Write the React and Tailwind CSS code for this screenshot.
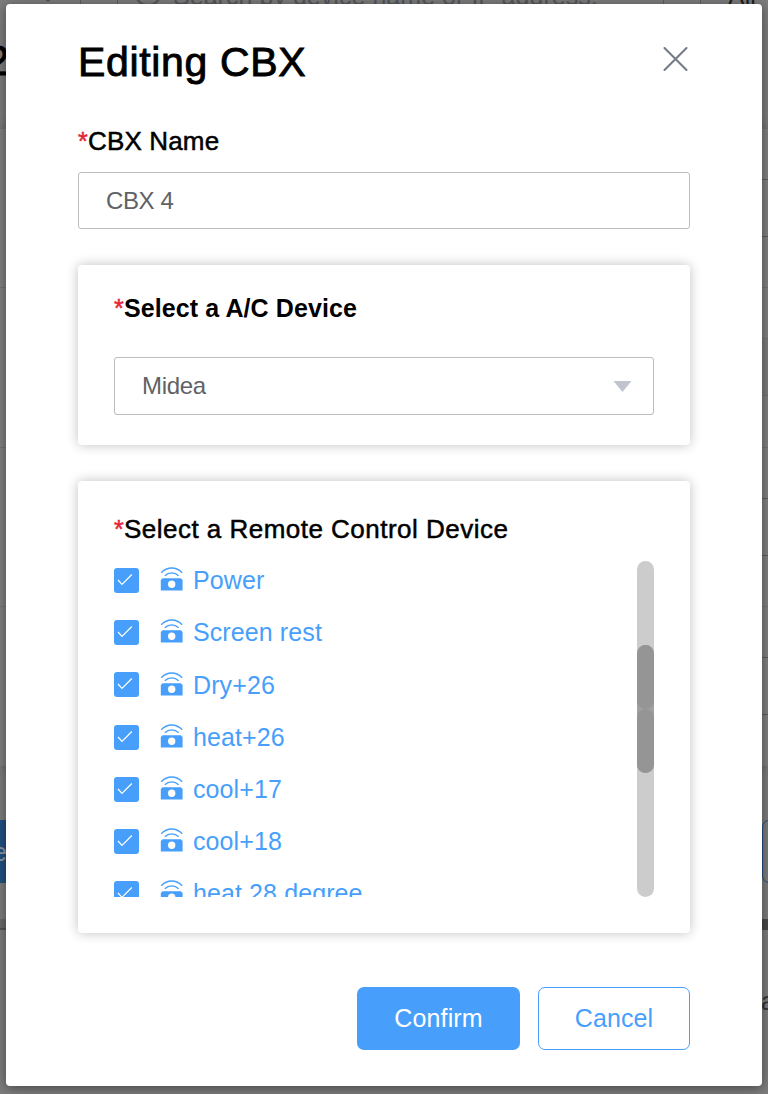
import React from "react";

const commands = ["Power", "Screen rest", "Dry+26", "heat+26", "cool+17", "cool+18", "heat 28 degree"];

const tableRows = [
  { height: "h-[159px]", field: "border-[#5c5c5c]" },
  { height: "h-[160px]", field: "border-[#727272] bg-[#7a7c7e]" },
  { height: "h-[159px]", field: "border-[#5c5c5c]" },
  { height: "h-[160px]", field: "border-[#5c5c5c]" },
];

function RemoteIcon() {
  return (
    <svg className="block shrink-0" width="24" height="26" viewBox="0 0 24 26" fill="none">
      <path d="M1.2 6.8C7.2 .4 16.2 .4 22.2 6.8M4.8 9.8C8.6 6 14.8 6 18.6 9.8" stroke="#479ffb" strokeWidth="1.3" />
      <path fillRule="evenodd" d="M2.6 12.2H20.8L22.6 14V24.4H.8V14ZM11.7 14.5a3.7 3.7 0 1 0 0 7.4a3.7 3.7 0 1 0 0-7.4Z" fill="#479ffb" />
    </svg>
  );
}

function Command({ label }) {
  return (
    <label className="flex h-[52.2px] items-start text-[#479ffb]">
      <span className="mt-[7px] flex size-[25px] shrink-0 items-center justify-center rounded-[3px] bg-[#479ffb]">
        <svg width="25" height="25" viewBox="0 0 25 25" fill="none">
          <path d="M4 12L8 16.3L17.8 6.5" stroke="white" strokeWidth="1.2" />
        </svg>
      </span>
      <span className="ml-[21px] mt-[5.2px]"><RemoteIcon /></span>
      <span className="ml-[9px] mt-[3.2px] text-[25px] leading-[32px] tracking-[0.1px] whitespace-nowrap">{label}</span>
    </label>
  );
}

function Required() {
  return <span className="w-[10px] shrink-0 text-[25px] text-[#e32636] [-webkit-text-stroke:0.5px_#e32636]">*</span>;
}

function Backdrop() {
  return (
    <div aria-hidden="true" className="col-start-1 row-start-1 flex h-[1094px] flex-col overflow-hidden bg-[#7d7d7d]">
      <div className="flex h-[34px] items-start text-[25px] leading-[30px] whitespace-nowrap text-[#56575a]">
        <div className="flex h-5 w-[81px] justify-end border-r border-[#606060] pr-[27px]">
          <svg width="10" height="4" viewBox="0 0 10 4"><path d="M2.5 0H7.5L5 2Z" fill="#56575a" /></svg>
        </div>
        <div className="ml-[36px] flex h-5 w-[547px] border-x border-[#606060] pl-[16px]">
          <svg className="mt-[-22px] shrink-0" width="28" height="28" viewBox="0 0 28 28" fill="none"><circle cx="14" cy="14" r="13" stroke="#56575a" strokeWidth="2" /></svg>
          <span className="ml-[11px] mt-[-19px] tracking-[0.04px]">Search by device name or IP address.</span>
        </div>
        <div className="ml-[36px] h-5 border-l border-[#606060] pl-[27px]">
          <span className="mt-[-19px] block text-[#202020]">All</span>
        </div>
      </div>
      <div className="-ml-[14px] h-[94px] pt-[4px] text-[42px] leading-[46px] text-black [-webkit-text-stroke:0.8px_black]">2</div>
      <div className="flex shrink-0 flex-col bg-[#808080] shadow-[0_0_12px_rgba(0,0,0,0.2)]">
        {tableRows.map((row, i) => (
          <div key={i} className={`${row.height} flex items-start justify-end border-t border-[#747474] pt-[50px]`}>
            <div className={`${row.field} h-[58px] w-[7px] border-y`} />
          </div>
        ))}
      </div>
      <div className="flex h-[153px] shrink-0 items-start justify-between pt-[54px]">
        <div className="-ml-[7px] h-[63px] w-[14px] bg-[#235080] pt-[16px] text-[25px] leading-[32px] text-[#8d98a5]">e</div>
        <div className="-mr-[34px] h-[63px] w-10 rounded-[7px] border border-[#235080]" />
      </div>
      <div className="flex h-[11px] shrink-0 justify-between border-b-2 border-[#555555] bg-[#6b6b6b]">
        <div className="ml-auto -mb-[2px] w-2 bg-[#484848]" />
      </div>
      <div className="-mr-[7px] mt-[56px] self-end text-[25px] leading-[30px] text-[#353535]">a</div>
    </div>
  );
}

export default function App() {
  return (
    <div className="grid h-[1094px] w-[768px] grid-cols-1 overflow-hidden font-['Liberation_Sans',Arial,sans-serif]">
      <Backdrop />
      <div className="z-10 col-start-1 row-start-1 px-[6px] pt-[4px]">
        <section className="flex h-[1082px] flex-col rounded-[4px] bg-white px-[72px] shadow-[0_2px_12px_rgba(0,0,0,0.45)]">
          <header className="flex h-[120px] items-start justify-between">
            <h1 className="pt-[34px] text-[41px] leading-[48px] tracking-[0.65px] whitespace-nowrap text-black [-webkit-text-stroke:0.9px_black]">Editing CBX</h1>
            <button aria-label="Close" className="pt-[41px]">
              <svg className="block" width="28" height="28" viewBox="0 0 28 28" fill="none">
                <path d="M2.5 3L24.5 25M24.5 3L2.5 25" stroke="#737b87" strokeWidth="2.1" strokeLinecap="round" />
              </svg>
            </button>
          </header>
          <div className="flex h-[48px] items-start text-[26px] leading-[34px] whitespace-nowrap">
            <Required />
            <span className="tracking-[0.15px] text-black [-webkit-text-stroke:0.5px_black]">CBX Name</span>
          </div>
          <div className="flex h-[57px] shrink-0 items-center rounded-[3px] border border-[#bcbcbc] pl-[27px] text-[24px] tracking-[-0.4px] text-[#606266]">CBX 4</div>

          <div className="mt-[36px] h-[180px] shrink-0 rounded-[4px] bg-white px-[36px] pt-[26px] shadow-[0_0_12px_rgba(0,0,0,0.25)]">
            <div className="flex text-[25px] leading-[34px] whitespace-nowrap">
              <Required />
              <span className="font-bold tracking-[0.1px] text-black">Select a A/C Device</span>
            </div>
            <div className="mt-[32px] flex h-[58px] items-center justify-between rounded-[3px] border border-[#bcbcbc] pl-[27px] pr-[21px] text-[24px] tracking-[-0.3px] text-[#606266]">
              <span>Midea</span>
              <svg width="19" height="12" viewBox="0 0 19 12"><path d="M.5 1H18.5L9.5 12Z" fill="#c0c4cc" /></svg>
            </div>
          </div>

          <div className="mt-[36px] h-[452px] shrink-0 rounded-[4px] bg-white px-[36px] pt-[31px] shadow-[0_0_12px_rgba(0,0,0,0.25)]">
            <div className="flex text-[26px] leading-[34px] whitespace-nowrap">
              <Required />
              <span className="tracking-[0.48px] text-black [-webkit-text-stroke:0.5px_black]">Select a Remote Control Device</span>
            </div>
            <div className="mt-[15px] flex h-[336px] justify-between overflow-hidden">
              <div>{commands.map((label) => <Command key={label} label={label} />)}</div>
              <div className="h-[336px] w-[17px] rounded-full bg-[#cccccc] pt-[84px]">
                <div className="h-[128px] rounded-full bg-[#a0a0a0]">
                  <div className="h-[64px] rounded-full bg-[#959595]" />
                  <div className="h-[64px] rounded-full bg-[#959595]" />
                </div>
              </div>
            </div>
          </div>

          <footer className="mt-[54px] flex justify-end gap-[18px]">
            <button className="h-[63px] w-[163px] rounded-[7px] bg-[#479ffb] text-[25px] tracking-[0.15px] text-white">Confirm</button>
            <button className="h-[63px] w-[152px] rounded-[7px] border border-[#479ffb] bg-white text-[25px] tracking-[0.1px] text-[#479ffb]">Cancel</button>
          </footer>
        </section>
      </div>
    </div>
  );
}
